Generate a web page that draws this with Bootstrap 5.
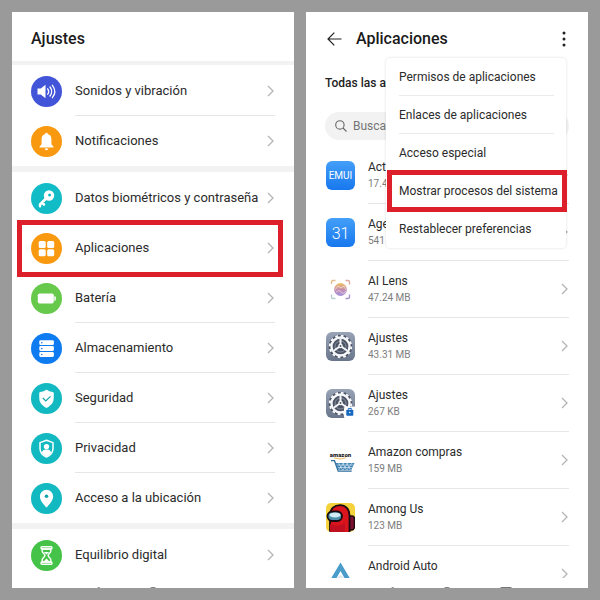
<!DOCTYPE html>
<html lang="es">
<head>
<meta charset="utf-8">
<meta name="viewport" content="width=device-width, initial-scale=1">
<title>Ajustes y aplicaciones</title>
<link href="https://cdn.jsdelivr.net/npm/bootstrap@5.3.0/dist/css/bootstrap.min.css" rel="stylesheet">
<style>
  body { background: #9a9a9a; font-family: Roboto, "Liberation Sans", sans-serif; color: #222; }
  .screens { padding: 12px; gap: 12px; }
  .phone { flex: 1 1 0; min-width: 0; background: #fff; }
  .phone-head { height: 49px; padding: 5px 19px 0; flex: none; }
  .phone-title { font-size: 16px; line-height: 20px; font-weight: 500; color: #1a1a1a; }
  .band { border-top: 6px solid #f2f2f2; padding-top: 1px; }
  .band-thin { border-top-width: 4px; }

  .setting { height: 50px; padding: 0 19px; gap: 13px; color: #2b2b2b; font-size: 13px; line-height: 18px; }
  .setting .disc { width: 31px; height: 31px; flex: none; }
  .row-body { border-bottom: 1px solid #e6e6e6; padding-right: 1px; min-width: 0; }
  .last-item .row-body { border-bottom-color: transparent; }
  .chev { width: 7px; height: 12px; flex: none; fill: none; stroke: #b4b4b4; stroke-width: 1.3; }

  .marker { position: absolute; border: 5px solid #dc1f2b; pointer-events: none; }
  .setting .marker { inset: -3px 11px -4px 5px; }
  .menu-entry .marker { inset: -1px -1px -3px 1px; }

  .icon-button { background: none; border: 0; padding: 0 3px; line-height: 0; }
  .back { padding: 0 2px; margin-right: 12px; }
  .all-apps { font-size: 12px; line-height: 18px; font-weight: 500; padding: 13px 19px 0; color: #222; }
  .search { height: 28px; margin: 20px 19px 7px; padding: 0 10px; gap: 6px; background: #f2f2f2; }
  .search input { border: 0; outline: 0; background: transparent; padding: 0; font-size: 12px; line-height: 18px; color: #666; }
  .search input::placeholder { color: #757575; opacity: 1; }

  .app { height: 57px; padding: 0 19px 0 20px; gap: 13px; color: #2b2b2b; }
  .app .art { width: 29px; height: 29px; flex: none; overflow: visible; }
  .app-name { font-size: 12px; line-height: 17px; padding-top: 1px; }
  .app-size { font-size: 10px; line-height: 16px; color: #7d7d7d; }

  .overflow-menu { position: absolute; top: 46px; right: 22px; width: 180px; background: #fff; border-radius: 4px; box-shadow: 0 0 3px rgba(0,0,0,.14); z-index: 2; }
  .menu-entry { height: 38px; padding: 0 12px 0 13px; color: #2b2b2b; font-size: 12px; line-height: 18px; background: none; border: 0; }
  .menu-entry > span:first-child { border-bottom: 1px solid #ebebeb; }
  .menu-entry.end-entry > span:first-child { border-bottom-color: transparent; }
  .menu-entry .marker { inset: -2px -1px -2px 1px; }
  .navbar-strip { height: 10px; background: #fff; position: absolute; inset: auto 0 0; overflow: hidden; gap: 47px; padding-top: 9px; }
  .navbar-strip svg { width: 12px; height: 12px; flex: none; fill: none; stroke: #777; stroke-width: 1.2; }
</style>
<script src="https://cdn.jsdelivr.net/npm/bootstrap@5.3.0/dist/js/bootstrap.bundle.min.js"></script>
</head>
<body>
<svg class="position-absolute" width="0" height="0" aria-hidden="true">
  <linearGradient id="steel" x2="0" y2="1"><stop stop-color="#99a3b6"/><stop offset="1" stop-color="#69758a"/></linearGradient>
  <symbol id="chevron" viewBox="0 0 7 12"><path d="M1 1l5 5-5 5"/></symbol>
  <symbol id="nav-back" viewBox="0 0 12 12"><path d="M11 .6v10.8L1 6z"/></symbol>
  <symbol id="nav-home" viewBox="0 0 12 12"><circle cx="6" cy="6" r="5.4"/></symbol>
  <symbol id="nav-recent" viewBox="0 0 12 12"><rect x=".6" y=".6" width="10.8" height="10.8" rx="1"/></symbol>
  <symbol id="gear" viewBox="0 0 29 29">
    <rect width="29" height="29" rx="6" fill="url(#steel)"/>
    <circle cx="14.5" cy="14.5" r="11.8" fill="#4b5365"/>
    <circle cx="14.5" cy="14.5" r="10.7" fill="none" stroke="#f4f6f9" stroke-width="2" stroke-dasharray="2.8 2.8"/>
    <circle cx="14.5" cy="14.5" r="9" fill="none" stroke="#f4f6f9" stroke-width="2.3"/>
    <circle cx="14.5" cy="14.5" r="5.5" fill="none" stroke="#8c95a6" stroke-width="1"/>
    <path d="M14.5 6.500v7.500M14.500 14l-6.800 4.800M14.500 14l6.800 4.800" stroke="#f4f6f9" stroke-width="2" fill="none"/>
    <circle cx="14.500" cy="14" r="2.300" fill="#f4f6f9"/><circle cx="14.500" cy="14" r=".9" fill="#4b5365"/>
  </symbol>
</svg>

<main class="screens d-flex vh-100">
  <section class="phone position-relative overflow-hidden" aria-label="Ajustes">
    <header class="phone-head d-flex align-items-center"><h1 class="phone-title m-0">Ajustes</h1></header>
    <nav>
      <div class="band band-thin">
        <a href="#sonidos" class="setting d-flex align-items-center text-decoration-none">
          <svg class="disc" viewBox="0 0 31 31"><circle cx="15.500" cy="15.500" r="15.500" fill="#4255d9"/><path d="M6.500 12.500h3.300l4.700-3.700v13.400l-4.700-3.700H6.500z" fill="#fff"/><path d="M16.700 12.800q2 2.700 0 5.400M19 11q3.400 4.500 0 9M21.400 9.300q4.800 6.200 0 12.400" fill="none" stroke="#fff" stroke-width="1.300" stroke-linecap="round"/></svg>
          <span class="row-body d-flex align-items-center justify-content-between flex-grow-1 h-100"><span>Sonidos y vibración</span><svg class="chev"><use href="#chevron"/></svg></span>
        </a>
        <a href="#notificaciones" class="setting last-item d-flex align-items-center text-decoration-none">
          <svg class="disc" viewBox="0 0 31 31"><circle cx="15.500" cy="15.500" r="15.500" fill="#f8990f"/><path d="M15.500 6.700a1.300 1.300 0 0 1 1.300 1.300c2.300.6 3.600 2.500 3.600 5v5.200l2.100 2.500v.9h-14v-.9l2.100-2.500V13c0-2.500 1.300-4.400 3.600-5a1.300 1.300 0 0 1 1.300-1.300zM13.700 22.400h3.600a1.800 1.800 0 0 1-3.600 0z" fill="#fff"/></svg>
          <span class="row-body d-flex align-items-center justify-content-between flex-grow-1 h-100"><span>Notificaciones</span><svg class="chev"><use href="#chevron"/></svg></span>
        </a>
      </div>
      <div class="band">
        <a href="#biometria" class="setting d-flex align-items-center text-decoration-none">
          <svg class="disc" viewBox="0 0 31 31"><circle cx="15.500" cy="15.500" r="15.500" fill="#12bcc6"/><path d="M15 15.500l-6 6v1.700M11 19.500l2 2" fill="none" stroke="#fff" stroke-width="2.500" stroke-linecap="round" stroke-linejoin="round"/><circle cx="18" cy="12.500" r="5.200" fill="#fff"/><circle cx="18.600" cy="11.900" r="1.500" fill="#12bcc6"/></svg>
          <span class="row-body d-flex align-items-center justify-content-between flex-grow-1 h-100"><span>Datos biométricos y contraseña</span><svg class="chev"><use href="#chevron"/></svg></span>
        </a>
        <a href="#aplicaciones" class="setting position-relative d-flex align-items-center text-decoration-none">
          <svg class="disc" viewBox="0 0 31 31"><circle cx="15.500" cy="15.500" r="15.500" fill="#f8990f"/><g fill="#fff"><rect x="7.700" y="8" width="7" height="7" rx="1.500"/><rect x="16.200" y="8" width="7" height="7" rx="1.500"/><rect x="7.700" y="16.300" width="7" height="7" rx="1.500"/><rect x="16.200" y="16.300" width="7" height="7" rx="1.500"/></g></svg>
          <span class="row-body d-flex align-items-center justify-content-between flex-grow-1 h-100"><span>Aplicaciones</span><svg class="chev"><use href="#chevron"/></svg></span>
          <span class="marker"></span>
        </a>
        <a href="#bateria" class="setting d-flex align-items-center text-decoration-none">
          <svg class="disc" viewBox="0 0 31 31"><circle cx="15.500" cy="15.500" r="15.500" fill="#66c94c"/><rect x="6.800" y="10.500" width="16" height="10" rx="1.800" fill="#fff"/><path d="M23.300 13.300h.5q1 0 1 1v2.400q0 1-1 1h-.5z" fill="#fff"/></svg>
          <span class="row-body d-flex align-items-center justify-content-between flex-grow-1 h-100"><span>Batería</span><svg class="chev"><use href="#chevron"/></svg></span>
        </a>
        <a href="#almacenamiento" class="setting d-flex align-items-center text-decoration-none">
          <svg class="disc" viewBox="0 0 31 31"><circle cx="15.500" cy="15.500" r="15.500" fill="#0f7bf0"/><g fill="#fff"><rect x="8.300" y="7.200" width="14.600" height="4.900" rx="1.400"/><rect x="8.300" y="13.100" width="14.600" height="4.900" rx="1.400"/><rect x="8.300" y="19" width="14.600" height="4.900" rx="1.400"/></g><g fill="#0f7bf0"><circle cx="10.800" cy="9.700" r=".8"/><circle cx="10.800" cy="15.600" r=".8"/><circle cx="10.800" cy="21.500" r=".8"/></g></svg>
          <span class="row-body d-flex align-items-center justify-content-between flex-grow-1 h-100"><span>Almacenamiento</span><svg class="chev"><use href="#chevron"/></svg></span>
        </a>
        <a href="#seguridad" class="setting d-flex align-items-center text-decoration-none">
          <svg class="disc" viewBox="0 0 31 31"><circle cx="15.500" cy="15.500" r="15.500" fill="#12b9c0"/><path d="M15.500 7.200q3.300 2.100 6.700 2.400v5.700c0 4.500-2.700 7.300-6.700 9.200-4-1.900-6.700-4.700-6.700-9.200V9.600q3.400-.3 6.700-2.400z" fill="#fff" stroke="#fff" stroke-linejoin="round"/><path d="M11.800 15l3 3 4.700-4.700" fill="none" stroke="#12a3aa" stroke-width="1.200"/></svg>
          <span class="row-body d-flex align-items-center justify-content-between flex-grow-1 h-100"><span>Seguridad</span><svg class="chev"><use href="#chevron"/></svg></span>
        </a>
        <a href="#privacidad" class="setting d-flex align-items-center text-decoration-none">
          <svg class="disc" viewBox="0 0 31 31"><circle cx="15.500" cy="15.500" r="15.500" fill="#12b9c0"/><path d="M15.500 7.300l6.500 2.300v5.800c0 4.200-2.700 6.900-6.500 8.700-3.800-1.800-6.500-4.500-6.500-8.700V9.600z" fill="none" stroke="#fff" stroke-width="1.500" stroke-linejoin="round"/><circle cx="15.500" cy="13.600" r="2.700" fill="#fff"/><path d="M10.700 19.500c1-2.500 2.600-3 4.800-3s3.800.5 4.800 3c-1.300 2-3 3.200-4.800 4-1.800-.8-3.500-2-4.800-4z" fill="#fff"/></svg>
          <span class="row-body d-flex align-items-center justify-content-between flex-grow-1 h-100"><span>Privacidad</span><svg class="chev"><use href="#chevron"/></svg></span>
        </a>
        <a href="#ubicacion" class="setting last-item d-flex align-items-center text-decoration-none">
          <svg class="disc" viewBox="0 0 31 31"><circle cx="15.500" cy="15.500" r="15.500" fill="#12b9c0"/><path d="M15.500 6.800a6.600 6.600 0 0 1 6.600 6.600c0 4.200-3.800 7.800-6.600 11.200-2.800-3.400-6.600-7-6.600-11.200a6.600 6.600 0 0 1 6.600-6.600z" fill="#fff"/><circle cx="15.500" cy="13.300" r="1.800" fill="#12a3aa"/></svg>
          <span class="row-body d-flex align-items-center justify-content-between flex-grow-1 h-100"><span>Acceso a la ubicación</span><svg class="chev"><use href="#chevron"/></svg></span>
        </a>
      </div>
      <div class="band">
        <a href="#equilibrio" class="setting last-item d-flex align-items-center text-decoration-none">
          <svg class="disc" viewBox="0 0 31 31"><circle cx="15.500" cy="15.500" r="15.500" fill="#45c348"/><g fill="none" stroke="#fff" stroke-width="1.400" stroke-linejoin="round"><rect x="10" y="6.800" width="11" height="2.200" rx="1"/><rect x="10" y="22" width="11" height="2.200" rx="1"/><path d="M11.200 9v2.300c0 1.800 2.700 2.700 2.700 4.200s-2.700 2.400-2.700 4.200V22h8.600v-2.300c0-1.800-2.700-2.700-2.700-4.200s2.700-2.400 2.700-4.200V9z"/></g><path d="M12.800 12h5.400l-2.700 2.500zM12.500 21.500l3-3 3 3z" fill="#fff"/></svg>
          <span class="row-body d-flex align-items-center justify-content-between flex-grow-1 h-100"><span>Equilibrio digital</span><svg class="chev"><use href="#chevron"/></svg></span>
        </a>
      </div>
    </nav>
    <div class="navbar-strip d-flex justify-content-center"><svg><use href="#nav-back"/></svg><svg><use href="#nav-home"/></svg><svg class="invisible"><use href="#nav-recent"/></svg></div>
  </section>

  <section class="phone position-relative overflow-hidden" aria-label="Aplicaciones">
    <header class="phone-head d-flex align-items-center">
      <button type="button" class="icon-button back" aria-label="Atrás"><svg width="15" height="14" viewBox="0 0 15 14" fill="none" stroke="#222" stroke-width="1.200"><path d="M14.500 7H1M7.300 .6L1 7l6.300 6.400"/></svg></button>
      <h2 class="phone-title m-0 flex-grow-1">Aplicaciones</h2>
      <button type="button" class="icon-button" aria-label="Más opciones"><svg width="4" height="16" viewBox="0 0 4 16" fill="#222"><circle cx="2" cy="2" r="1.500"/><circle cx="2" cy="8" r="1.500"/><circle cx="2" cy="14" r="1.500"/></svg></button>
    </header>
    <h3 class="all-apps m-0">Todas las aplicaciones</h3>
    <label class="search d-flex align-items-center rounded-pill">
      <svg class="flex-shrink-0" width="12" height="12" viewBox="0 0 12 12" fill="none" stroke="#666" stroke-width="1.100"><circle cx="4.900" cy="4.900" r="4.200"/><path d="M8 8l3.500 3.500"/></svg>
      <input class="flex-grow-1 w-100" type="search" placeholder="Buscar aplicaciones" aria-label="Buscar aplicaciones">
    </label>
    <div>
      <a href="#app-1" class="app d-flex align-items-center text-decoration-none">
        <svg class="art" viewBox="0 0 29 29"><linearGradient id="sky" x2="0" y2="1"><stop stop-color="#449ff8"/><stop offset="1" stop-color="#1778ee"/></linearGradient><rect width="29" height="29" rx="6" fill="url(#sky)"/><text x="14.500" y="18" text-anchor="middle" font-size="10" fill="#fff">EMUI</text></svg>
        <span class="row-body d-flex align-items-center justify-content-between flex-grow-1 h-100"><span><span class="app-name d-block">Actualización</span><span class="app-size d-block">17.42 MB</span></span><svg class="chev"><use href="#chevron"/></svg></span>
      </a>
      <a href="#app-2" class="app d-flex align-items-center text-decoration-none">
        <svg class="art" viewBox="0 0 29 29"><rect width="29" height="29" rx="6" fill="url(#sky)"/><text x="14.500" y="20.500" text-anchor="middle" font-size="16" font-weight="300" fill="#fff">31</text></svg>
        <span class="row-body d-flex align-items-center justify-content-between flex-grow-1 h-100"><span><span class="app-name d-block">Agenda</span><span class="app-size d-block">541 KB</span></span><svg class="chev"><use href="#chevron"/></svg></span>
      </a>
      <a href="#app-3" class="app d-flex align-items-center text-decoration-none">
        <svg class="art" viewBox="0 0 29 29"><linearGradient id="lens" x2="0" y2="1"><stop stop-color="#f2c05f"/><stop offset=".5" stop-color="#c58fae"/><stop offset="1" stop-color="#a493dd"/></linearGradient><circle cx="14.500" cy="14.500" r="6.400" fill="url(#lens)"/><path d="M9 15l3-4 3 2 3-2 2 4M10 17q3-3 5 0t5-1" fill="none" stroke="#fff" stroke-opacity=".5"/><g fill="none" stroke-width="1.400"><path d="M5.500 9V7q0-1.500 1.500-1.500h2.500" stroke="#e5bd88"/><path d="M19.500 5.500H22q1.500 0 1.500 1.500v2.500" stroke="#dcaaa0"/><path d="M5.500 19.500V22q0 1.500 1.500 1.500h2.500" stroke="#b9d1ce"/><path d="M19.500 23.500H22q1.500 0 1.500-1.500v-2.500" stroke="#a894cf"/></g></svg>
        <span class="row-body d-flex align-items-center justify-content-between flex-grow-1 h-100"><span><span class="app-name d-block">AI Lens</span><span class="app-size d-block">47.24 MB</span></span><svg class="chev"><use href="#chevron"/></svg></span>
      </a>
      <a href="#app-4" class="app d-flex align-items-center text-decoration-none">
        <svg class="art" viewBox="0 0 29 29"><use href="#gear"/></svg>
        <span class="row-body d-flex align-items-center justify-content-between flex-grow-1 h-100"><span><span class="app-name d-block">Ajustes</span><span class="app-size d-block">43.31 MB</span></span><svg class="chev"><use href="#chevron"/></svg></span>
      </a>
      <a href="#app-5" class="app d-flex align-items-center text-decoration-none">
        <svg class="art" viewBox="0 0 29 29"><use href="#gear"/><rect x="18" y="17.500" width="12" height="12" rx="2" fill="#fff"/><rect x="20.300" y="20.700" width="7" height="6" rx=".8" fill="#1667c0"/><path d="M22.300 20.700v-1.300h3v1.300" fill="none" stroke="#1667c0"/><circle cx="23.800" cy="23.500" r=".8" fill="#fff"/></svg>
        <span class="row-body d-flex align-items-center justify-content-between flex-grow-1 h-100"><span><span class="app-name d-block">Ajustes</span><span class="app-size d-block">267 KB</span></span><svg class="chev"><use href="#chevron"/></svg></span>
      </a>
      <a href="#app-6" class="app d-flex align-items-center text-decoration-none">
        <svg class="art" viewBox="0 0 29 29"><text x="14.500" y="10.500" text-anchor="middle" font-size="6" font-weight="900" fill="#222">amazon</text><path d="M8 11.800q6 2.400 12 0" fill="none" stroke="#f0a840" stroke-width=".8"/><path d="M5 14.700h3.500l3.700 10.500h13.500" fill="none" stroke="#2d6d9c" stroke-width="1.300"/><path d="M9.500 17h19l-3.200 7H12z" fill="#3f83b5"/><path d="M11 19h16.500M12 21.500h14.500M12.500 17l4 7M16.500 17l4 7M20.500 17l4 7M18 17l-5.500 7M22 17l-5 7M26 17l-5 7" stroke="#e4eff7" stroke-width=".6"/></svg>
        <span class="row-body d-flex align-items-center justify-content-between flex-grow-1 h-100"><span><span class="app-name d-block">Amazon compras</span><span class="app-size d-block">159 MB</span></span><svg class="chev"><use href="#chevron"/></svg></span>
      </a>
      <a href="#app-7" class="app d-flex align-items-center text-decoration-none">
        <svg class="art" viewBox="0 0 29 29"><clipPath id="tile"><rect width="29" height="29" rx="5"/></clipPath><g clip-path="url(#tile)"><rect width="29" height="29" fill="#f4d23c"/><path d="M22 13h4q2.500 0 2.500 3v8q0 3-3 3H22z" fill="#7c1030" stroke="#190a10" stroke-width="1.500"/><path d="M4 30V12C4 5.500 8.500 2.200 14 2.200S23.500 6 23.500 12v18z" fill="#d9141d" stroke="#190a10" stroke-width="1.800"/><path d="M4 21q8 4 15-1v9H4z" fill="#c01020"/><rect x="1.500" y="8.500" width="14.500" height="9.500" rx="4.700" fill="#4b8faa" stroke="#190a10" stroke-width="1.800"/><ellipse cx="9" cy="12" rx="5.500" ry="2.600" fill="#d2ecf5"/></g></svg>
        <span class="row-body d-flex align-items-center justify-content-between flex-grow-1 h-100"><span><span class="app-name d-block">Among Us</span><span class="app-size d-block">123 MB</span></span><svg class="chev"><use href="#chevron"/></svg></span>
      </a>
      <a href="#app-8" class="app d-flex align-items-center text-decoration-none">
        <svg class="art" viewBox="0 0 29 29"><path d="M14.500 15l5 4.500-5-2-5 2z" fill="#dce5ea"/><path d="M14.500 2.500l9.500 16-2.500 1.500-2.500-1-4.500-8-4.500 8-2.500 1L5 18.500z" fill="#4a9ccb"/></svg>
        <span class="row-body d-flex align-items-center justify-content-between flex-grow-1 h-100"><span><span class="app-name d-block">Android Auto</span><span class="app-size d-block">&nbsp;</span></span><svg class="chev"><use href="#chevron"/></svg></span>
      </a>
    </div>
    <div class="overflow-menu" role="menu">
      <button type="button" role="menuitem" class="menu-entry d-block w-100 text-start"><span class="d-flex align-items-center h-100">Permisos de aplicaciones</span></button>
      <button type="button" role="menuitem" class="menu-entry d-block w-100 text-start"><span class="d-flex align-items-center h-100">Enlaces de aplicaciones</span></button>
      <button type="button" role="menuitem" class="menu-entry d-block w-100 text-start"><span class="d-flex align-items-center h-100">Acceso especial</span></button>
      <button type="button" role="menuitem" class="menu-entry position-relative d-block w-100 text-start"><span class="d-flex align-items-center h-100 text-nowrap">Mostrar procesos del sistema</span><span class="marker"></span></button>
      <button type="button" role="menuitem" class="menu-entry end-entry d-block w-100 text-start"><span class="d-flex align-items-center h-100">Restablecer preferencias</span></button>
    </div>
    <div class="navbar-strip d-flex justify-content-center"><svg><use href="#nav-back"/></svg><svg><use href="#nav-home"/></svg><svg><use href="#nav-recent"/></svg></div>
  </section>
</main>
</body>
</html>
